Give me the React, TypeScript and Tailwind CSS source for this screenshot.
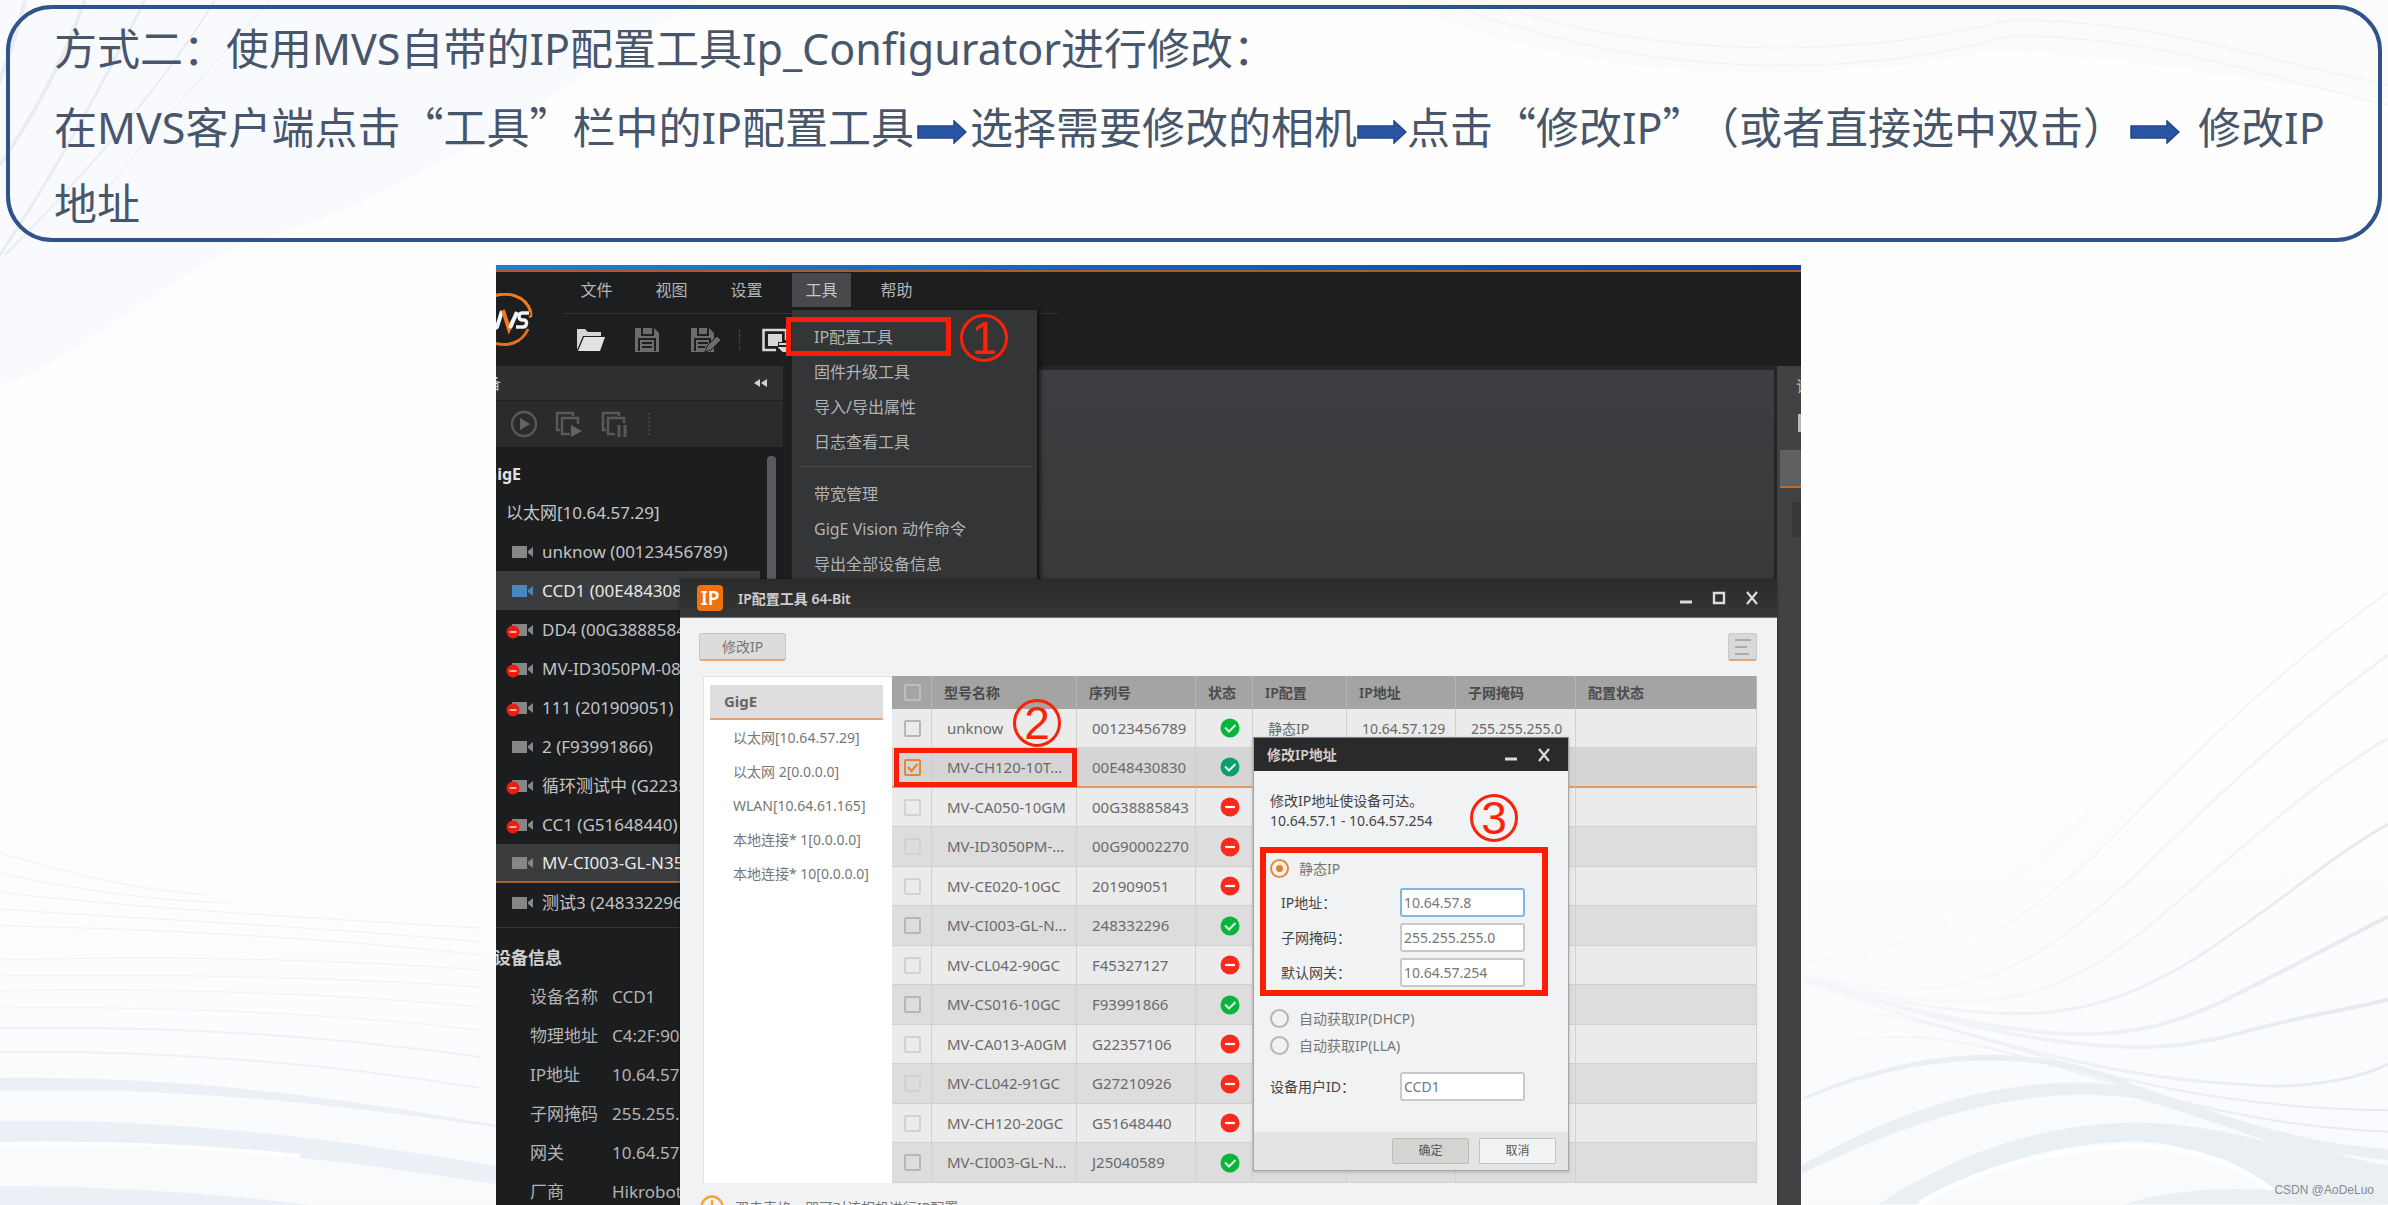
import React, { useState } from "react";

const sans = "font-['Noto_Sans','Noto_Sans_CJK_SC',sans-serif]";
const cjk = "font-['Noto_Sans_CJK_SC',sans-serif]";

const menus = ["文件", "视图", "设置", "工具", "帮助"];

const toolItems = ["IP配置工具", "固件升级工具", "导入/导出属性", "日志查看工具"];
const toolItemsMore = ["带宽管理", "GigE Vision 动作命令", "导出全部设备信息"];

const cameras = [
  { name: "unknow (00123456789)", state: "idle" },
  { name: "CCD1 (00E48430830)", state: "open" },
  { name: "DD4 (00G38885843)", state: "off" },
  { name: "MV-ID3050PM-08S (00G90002270)", state: "off" },
  { name: "111 (201909051)", state: "off" },
  { name: "2 (F93991866)", state: "idle" },
  { name: "循环测试中 (G22357106)", state: "off" },
  { name: "CC1 (G51648440)", state: "off" },
  { name: "MV-CI003-GL-N35 (J25040589)", state: "active" },
  { name: "测试3 (248332296)", state: "idle" },
];

const deviceInfo = [
  ["设备名称", "CCD1"],
  ["物理地址", "C4:2F:90:"],
  ["IP地址", "10.64.57."],
  ["子网掩码", "255.255.255.0"],
  ["网关", "10.64.57."],
  ["厂商", "Hikrobot"],
];

const networks = [
  "以太网[10.64.57.29]",
  "以太网 2[0.0.0.0]",
  "WLAN[10.64.61.165]",
  "本地连接* 1[0.0.0.0]",
  "本地连接* 10[0.0.0.0]",
];

const columns = ["型号名称", "序列号", "状态", "IP配置", "IP地址", "子网掩码", "配置状态"];

const rows = [
  { model: "unknow", serial: "00123456789", ok: true, mode: "静态IP", ip: "10.64.57.129", mask: "255.255.255.0" },
  { model: "MV-CH120-10T...", serial: "00E48430830", ok: true, selected: true },
  { model: "MV-CA050-10GM", serial: "00G38885843", ok: false },
  { model: "MV-ID3050PM-...", serial: "00G90002270", ok: false },
  { model: "MV-CE020-10GC", serial: "201909051", ok: false },
  { model: "MV-CI003-GL-N...", serial: "248332296", ok: true },
  { model: "MV-CL042-90GC", serial: "F45327127", ok: false },
  { model: "MV-CS016-10GC", serial: "F93991866", ok: true },
  { model: "MV-CA013-A0GM", serial: "G22357106", ok: false },
  { model: "MV-CL042-91GC", serial: "G27210926", ok: false },
  { model: "MV-CH120-20GC", serial: "G51648440", ok: false },
  { model: "MV-CI003-GL-N...", serial: "J25040589", ok: true },
];

const Waves = () => (
  <svg
    className="absolute inset-0 w-full h-full"
    viewBox="0 0 2388 1205"
    preserveAspectRatio="none"
    fill="none"
    aria-hidden="true"
  >
    <defs>
      <linearGradient id="haze" x1="0" y1="0" x2="0" y2="1">
        <stop offset="0" stopColor="#fefefe" />
        <stop offset="1" stopColor="#f9fafc" />
      </linearGradient>
      <linearGradient id="strand" gradientUnits="userSpaceOnUse" x1="0" y1="0" x2="1568" y2="0">
        <stop offset="0" stopColor="#e6eaf0" stopOpacity="0.1" />
        <stop offset="0.35" stopColor="#e6eaf0" stopOpacity="0.5" />
        <stop offset="1" stopColor="#e6eaf0" />
      </linearGradient>
      <linearGradient id="strandSoft" gradientUnits="userSpaceOnUse" x1="0" y1="0" x2="1568" y2="0">
        <stop offset="0" stopColor="#f0f2f6" stopOpacity="0.2" />
        <stop offset="1" stopColor="#f0f2f6" />
      </linearGradient>
    </defs>
    <path d="M0 0H700C600 60 420 200 240 245C150 290 60 370 0 385Z" fill="#f9fafe" />
    <path d="M1400 0C1560 80 1800 90 2000 50C2150 60 2250 80 2388 100V0Z" fill="#fbfbfc" />
    <path d="M0 830C200 835 300 865 496 865V1205H0Z" fill="url(#haze)" />
    <path d="M1801 850C2000 800 2200 760 2388 720V1205H1801Z" fill="url(#haze)" />
    <g stroke="#e9ecf0" strokeWidth="2">
      <path d="M25 0C18 30 8 60 -4 90" strokeWidth="4" />
      <path d="M85 0C60 70 30 120 0 165" strokeWidth="4" />
      <path d="M145 0C100 90 50 180 0 255" strokeWidth="3" />
      <path d="M215 0C160 90 80 180 5 255" />
      <path d="M270 0C220 60 150 130 100 200" strokeWidth="1" />
    </g>
    <g stroke="#f3f5f9" strokeWidth="2">
      <path d="M1480 0C1650 60 1850 60 2010 20C2160 20 2260 60 2388 85" />
      <path d="M1440 0C1640 80 1850 80 2010 36C2160 36 2260 76 2388 105" />
    </g>
    <g stroke="#eef1f6" strokeWidth="1">
      <path d="M0 853C60 870 130 890 210 895" />
      <path d="M0 873C70 888 140 900 230 903" />
      <path d="M0 892C80 902 200 912 480 928" />
      <path d="M0 909C120 918 300 925 480 942" />
      <path d="M0 926C120 928 300 935 480 955" />
      <path d="M0 960C150 956 320 958 480 970" />
      <path d="M0 976C150 974 320 976 480 987" />
      <path d="M0 991C150 988 320 992 480 1007" />
      <path d="M0 1008C150 1006 320 1012 480 1030" />
      <path d="M0 1028C150 1026 320 1034 480 1057" strokeWidth="2" />
      <path d="M0 1052C150 1050 320 1062 480 1088" strokeWidth="2" />
    </g>
    <path d="M0 1078C180 1076 330 1096 496 1125V1127C330 1104 180 1086 0 1091Z" fill="#eceff5" />
    <path d="M0 1121C180 1118 340 1140 496 1166V1184C340 1160 180 1140 0 1142Z" fill="#ebeff6" />
    <path d="M0 1144C120 1142 220 1148 300 1156" stroke="#fff" strokeWidth="4" />
    <path d="M0 1186C120 1186 230 1195 310 1205H0Z" fill="#ebeff6" />

    <g transform="translate(1800 240) scale(.375 .615)">
      <g stroke="url(#strand)" strokeWidth="2">
        <path d="M5 1172C300 1170 560 1060 770 930" strokeWidth="1" stroke="#f5f6f9" vectorEffect="non-scaling-stroke" />
        <path d="M5 1205C300 1215 560 1150 900 930C1120 790 1340 670 1568 573" stroke="url(#strandSoft)" vectorEffect="non-scaling-stroke" />
        <path d="M5 1190C400 1260 600 1200 900 1030C1150 880 1350 770 1568 675" strokeWidth="3" stroke="url(#strandSoft)" vectorEffect="non-scaling-stroke" />
        <path d="M5 1195C500 1280 700 1240 1000 1080C1250 950 1400 870 1568 810" strokeWidth="3" stroke="url(#strandSoft)" vectorEffect="non-scaling-stroke" />
        <path d="M5 1198C600 1300 800 1260 1050 1170C1300 1070 1420 1000 1568 950" strokeWidth="3" vectorEffect="non-scaling-stroke" />
        <path d="M5 1200C700 1330 900 1300 1120 1240C1320 1180 1440 1140 1568 1100" strokeWidth="4" vectorEffect="non-scaling-stroke" />
        <path d="M5 1202C750 1345 1000 1320 1200 1285C1350 1260 1480 1250 1568 1235" strokeWidth="4" vectorEffect="non-scaling-stroke" />
        <path d="M5 1205C780 1370 1080 1370 1270 1376C1400 1374 1500 1360 1568 1340" strokeWidth="3" vectorEffect="non-scaling-stroke" />
        <path d="M5 1262C400 1220 700 1410 1568 1415" vectorEffect="non-scaling-stroke" />
        <path d="M10 1317C500 1230 800 1430 1568 1450" vectorEffect="non-scaling-stroke" />
      </g>
      <path d="M10 1393C400 1290 700 1320 900 1375C1150 1430 1350 1470 1568 1478V1496C1300 1480 1100 1430 900 1385C700 1330 400 1300 10 1398Z" fill="#ebeff4" />
      <path d="M5 1505C300 1400 600 1350 900 1378C1150 1420 1350 1480 1568 1505V1540C1400 1500 1150 1440 900 1396C600 1370 300 1430 5 1518Z" fill="#ebeff4" />
      <path d="M210 1568C500 1450 800 1420 1050 1442C1250 1460 1430 1500 1568 1530V1568H1330C1150 1490 980 1465 900 1466C700 1466 500 1500 310 1568Z" fill="#eaeff4" />
      <path d="M320 1566C520 1495 740 1474 900 1474C1050 1476 1180 1500 1300 1566" stroke="#fff" strokeWidth="9" />
      <path d="M860 1568C1050 1535 1250 1535 1568 1568Z" fill="#eaeff4" />
    </g>
  </svg>
);

const Arrow = ({ className = "" }: { className?: string }) => (
  <svg className={`inline-block w-[50px] h-[24px] align-middle ${className}`} viewBox="0 0 50 24">
    <path d="M1 6H37V1L49 12L37 23V18H1Z" fill="#2a55a5" stroke="#23468a" strokeWidth="1.5" />
  </svg>
);

const Step = ({ n, className }: { n: number; className: string }) => (
  <span
    className={`absolute w-[48px] h-[48px] rounded-full border-3 border-[#fb2208] text-[#fb2208] flex items-center justify-center font-['Liberation_Sans',sans-serif] text-[46px] leading-[44px] ${className}`}
  >
    {n}
  </span>
);

const CameraIcon = ({ state }: { state: string }) => (
  <svg className="w-[28px] h-[18px] shrink-0" viewBox="0 0 28 18">
    <path
      d="M6 3H21V15H6Z M22 8L27 4V14L22 10Z"
      fill={state === "open" ? "#4a86bb" : "#858687"}
    />
    {state === "off" && (
      <>
        <circle cx="7" cy="11" r="6.5" fill="#ec1c10" />
        <path d="M3.5 11H10.5" stroke="#ffd9d2" strokeWidth="1.6" />
      </>
    )}
  </svg>
);

const StatusIcon = ({ ok, selected }: { ok: boolean; selected?: boolean }) => (
  <svg className="block w-[20px] h-[20px]" viewBox="0 0 20 20" fill="none">
    <circle cx="10" cy="10" r="9.5" fill={ok ? (selected ? "#0b9e70" : "#08b43c") : "#fa2a1c"} />
    {ok ? (
      <path d="M5 9.5L9 13.5L15.5 7" stroke="#d9f7e3" strokeWidth="2" />
    ) : (
      <path d="M5 10H15" stroke="#fff" strokeWidth="2.2" />
    )}
  </svg>
);

const Minimize = () => (
  <svg className="w-[14px] h-[14px]" viewBox="0 0 14 14">
    <path d="M1 11H13" stroke="#dcdcdc" strokeWidth="3" />
  </svg>
);

const Close = () => (
  <svg className="w-[14px] h-[14px]" viewBox="0 0 14 14">
    <path d="M2 1L12 13M12 1L2 13" stroke="#dcdcdc" strokeWidth="2.2" />
  </svg>
);

const Logo = () => (
  <svg className="block w-[37px] h-[56px] overflow-hidden" viewBox="0 0 37 56" fill="none">
    <path d="M-2 3C10 -1 29 1 35 19" stroke="#f07a1c" strokeWidth="3" />
    <path d="M35 19C36 23 35 25 33 23" stroke="#f07a1c" strokeWidth="2" />
    <path d="M-2 50C12 54 26 50 32 36" stroke="#e2701c" strokeWidth="3" />
    <path d="M-4 37L1 34L6 18" stroke="#f4f4f4" strokeWidth="4" />
    <path d="M7 17L13 36L17 27" stroke="#f07a1c" strokeWidth="4" />
    <path d="M14 35L21 19" stroke="#f4f4f4" strokeWidth="4" />
    <path d="M33 20H26C22 20 22 27 26 27H28C32 27 31 34 27 34H20" stroke="#f4f4f4" strokeWidth="3.5" />
  </svg>
);

const Toolbar = () => (
  <div className="flex items-center h-[52px] pl-[13px]">
    <button aria-label="打开" className="w-[58px]">
      <svg className="w-[28px] h-[24px]" viewBox="0 0 28 24">
        <path d="M0 1H8L11 4H24V8H6L0 22Z" fill="#d6d6d6" />
        <path d="M7 9H28L23 23H1Z" fill="#e2e2e2" />
      </svg>
    </button>
    <button aria-label="保存" className="w-[56px]">
      <svg className="w-[24px] h-[24px]" viewBox="0 0 24 24">
        <path d="M0 0H19L24 5V24H0Z" fill="#6c6d6f" />
        <path d="M7 0V7H18V0" fill="none" stroke="#1d1e1f" strokeWidth="2" />
        <path d="M4 23V11H20V23M7 15H17M7 19H17" fill="none" stroke="#1d1e1f" strokeWidth="2" />
      </svg>
    </button>
    <button aria-label="另存为" className="w-[48px]">
      <svg className="w-[30px] h-[24px]" viewBox="0 0 30 24">
        <path d="M0 0H18L23 5V24H0Z" fill="#6c6d6f" />
        <path d="M7 0V7H17V0M4 23V11H19V23M7 15H17M7 19H14" fill="none" stroke="#1d1e1f" strokeWidth="2" />
        <path d="M14 24L16 18L26 8L30 12L20 22Z" fill="#6c6d6f" stroke="#1d1e1f" />
      </svg>
    </button>
    <span className="h-[20px] border-l border-dotted border-[#555] mr-[22px]" />
    <button aria-label="导出">
      <svg className="w-[28px] h-[24px]" viewBox="0 0 28 24" fill="none">
        <path d="M14 22H1.5V2H24V12" stroke="#d8d8d8" strokeWidth="2.5" />
        <path d="M6 6H20V14H16V18H6Z" fill="#d8d8d8" />
        <path d="M17 16H28M18 20H27L22 24Z" stroke="#d8d8d8" strokeWidth="2" fill="#d8d8d8" />
      </svg>
    </button>
  </div>
);

const Sidebar = () => (
  <aside className="w-[287px] shrink-0 bg-[#1c1d1f] text-[17px] text-[#c4c4c4]">
    <div className="h-[35px] bg-[#2f3031] border-b border-[#1f2021] flex items-center justify-between pr-[16px]">
      <div className="w-[5px] flex justify-end overflow-hidden whitespace-nowrap text-[16px]">设备</div>
      <svg className="w-[13px] h-[8px]" viewBox="0 0 13 8">
        <path d="M6 0V8L0 4ZM13 0V8L7 4Z" fill="#d0d0d0" />
      </svg>
    </div>
    <div className="h-[46px] bg-[#2a2b2c] flex items-center pl-[14px]">
      <svg className="w-[140px] h-[28px]" viewBox="0 0 140 28" fill="none" stroke="#58595a" strokeWidth="2.4">
        <circle cx="14" cy="14" r="12" />
        <path d="M10 8L20 14L10 20Z" fill="#626364" stroke="none" />
        <path d="M50 20H47V3H63V6" />
        <path d="M60 24H52V8H68V14" />
        <path d="M61 15L72 21L61 27Z" fill="#626364" stroke="none" />
        <path d="M96 20H93V3H109V6" />
        <path d="M105 24H98V8H114V13" />
        <path d="M109 15V27M115 15V27" strokeWidth="3" />
        <path d="M139 3V25" strokeWidth="1" strokeDasharray="2 2" />
      </svg>
    </div>
    <div className="flex pt-[7px]">
      <ul className="w-[264px] overflow-hidden whitespace-nowrap">
        <li className="h-[39px] flex items-center">
          <span className="w-[25px] flex justify-end overflow-hidden text-[16px] font-bold text-[#e0e0e0]">
            GigE
          </span>
        </li>
        <li className="h-[39px] flex items-center pl-[10px]">以太网[10.64.57.29]</li>
        {cameras.map((item) => (
          <li
            key={item.name}
            className={`h-[39px] flex items-center gap-x-2 pl-[10px] ${
              item.state === "open"
                ? "bg-[#3b3c3d] text-[#e8e8e8]"
                : item.state === "active"
                ? "bg-[#3b3c3d] text-[#e8e8e8] border-b-2 border-[#a9602a]"
                : ""
            }`}
          >
            <CameraIcon state={item.state} />
            {item.name}
          </li>
        ))}
      </ul>
      <div className="ml-[7px] mt-[2px] w-[9px] rounded-t-sm bg-[#595a60]" />
    </div>
    <div className="mt-[5px] border-t border-[#303132] pt-[10px]">
      <h2 className="h-[39px] flex items-center font-bold text-[#d0d0d0]">
        <span className="-ml-[2px]">设备信息</span>
      </h2>
      <dl className="grid grid-cols-[82px_1fr] pl-[34px] whitespace-nowrap">
        {deviceInfo.map(([label, value]) => (
          <React.Fragment key={label}>
            <dt className="h-[39px] flex items-center text-[#b4b4b4]">{label}</dt>
            <dd className="h-[39px] flex items-center text-[#b4b4b4]">{value}</dd>
          </React.Fragment>
        ))}
      </dl>
    </div>
  </aside>
);

const ToolMenu = () => (
  <div className="absolute left-[296px] top-[45px] w-[245px] h-[280px] bg-[#343536] text-[16px] text-[#b2b3b5] pt-[9px] px-[6px] shadow-[3px_2px_4px_#111]">
    {toolItems.map((item) => (
      <button key={item} className="flex items-center w-full h-[35px] pl-[16px]">
        {item}
      </button>
    ))}
    <hr className="border-[#4a4b4c] mt-[7px] mb-[9px]" />
    {toolItemsMore.map((item) => (
      <button key={item} className="flex items-center w-full h-[35px] pl-[16px]">
        {item}
      </button>
    ))}
  </div>
);

const DeviceTable = () => (
  <table className="flex-1 table-fixed border-separate border-spacing-0 text-left text-[14px] text-[#6a6a6a] whitespace-nowrap">
    <colgroup>
      <col className="w-[40px]" />
      <col className="w-[145px]" />
      <col className="w-[119px]" />
      <col className="w-[57px]" />
      <col className="w-[94px]" />
      <col className="w-[109px]" />
      <col className="w-[120px]" />
      <col />
    </colgroup>
    <thead>
      <tr className="bg-[#a4a4a4] text-[#4b4b4b]">
        <th className="h-[33px] p-0 pl-[12px] border-r border-[#b5b5b5]">
          <input
            type="checkbox"
            aria-label="全选"
            className="block appearance-none w-[17px] h-[17px] border-2 border-[#bdbdbd] rounded-xs"
          />
        </th>
        {columns.map((item) => (
          <th key={item} className="h-[33px] p-0 pl-[12px] border-r border-[#b5b5b5] font-semibold">
            {item}
          </th>
        ))}
      </tr>
    </thead>
    <tbody>
      {rows.map((row, index) => {
        const cell = `p-0 border-r ${
          index % 2 ? "h-[40px]" : "h-[39px]"
        } ${row.selected ? "border-b-2 border-b-[#e09a62] border-r-[#cccccc]" : "border-b border-[#d0d0d0]"}`;
        return (
          <tr
            key={row.serial}
            className={row.selected ? "bg-[#d6d5d5]" : index % 2 ? "bg-[#dddddd]" : "bg-[#ebebeb]"}
          >
            <td className={`${cell} pl-[12px]`}>
              <span className="relative block w-[17px] h-[17px]">
                <input
                  type="checkbox"
                  aria-label={row.model}
                  defaultChecked={row.selected}
                  className={`block appearance-none w-[17px] h-[17px] border-2 rounded-xs ${
                    row.selected
                      ? "border-[#e98532]"
                      : row.ok
                      ? "border-[#b6b6b6]"
                      : "border-[#d2d2d2]"
                  }`}
                />
                {row.selected && (
                  <svg className="absolute inset-0" viewBox="0 0 17 17" fill="none">
                    <path d="M4 8L7.500 12L13.500 5" stroke="#e98532" strokeWidth="2.2" />
                  </svg>
                )}
              </span>
            </td>
            <td className={`${cell} pl-[15px] text-[15px]`}>{row.model}</td>
            <td className={`${cell} pl-[15px] text-[15px]`}>{row.serial}</td>
            <td className={`${cell} pl-[24px]`}>
              <StatusIcon ok={row.ok} selected={row.selected} />
            </td>
            <td className={`${cell} pl-[15px]`}>{row.mode}</td>
            <td className={`${cell} pl-[15px]`}>{row.ip}</td>
            <td className={`${cell} pl-[15px]`}>{row.mask}</td>
            <td className={cell} />
          </tr>
        );
      })}
    </tbody>
  </table>
);

const Field = ({ id, label, value, focused, labelClass }: any) => (
  <div className="flex items-center h-[29px]">
    <label htmlFor={id} className={`text-[#444] ${labelClass}`}>
      {label}
    </label>
    <input
      id={id}
      defaultValue={value}
      className={`w-[125px] h-[29px] bg-white border-2 rounded-[3px] px-[2px] text-[#777] outline-none ${
        focused ? "border-[#83b5e0]" : "border-[#c9c9c9]"
      }`}
    />
  </div>
);

const Radio = ({ value, mode, setMode, label }: any) => (
  <label className="flex items-center gap-x-[10px] h-[27px] text-[#777]">
    <span className="relative w-[19px] h-[19px]">
      <input
        type="radio"
        name="mode"
        checked={mode === value}
        onChange={() => setMode(value)}
        className="block appearance-none w-[19px] h-[19px] rounded-full border-2 border-[#b5b5b5] checked:border-[#e5893a]"
      />
      {mode === value && (
        <span className="absolute left-[6px] top-[6px] w-[7px] h-[7px] rounded-full bg-[#ea7d20]" />
      )}
    </span>
    {label}
  </label>
);

const IpDialog = () => {
  const [mode, setMode] = useState("static");
  return (
    <div className="absolute left-[573px] top-[158px] w-[316px] bg-[#f1f2f4] border border-[#a5a7a9] border-t-[#c26a4a] text-[14px] shadow-[0_1px_3px_#8888]">
      <div className="flex items-center h-[33px] bg-[#2a2a2a] pl-[13px] pr-[17px] text-[#cfcfcf]">
        <h3 className="flex-1 font-semibold">修改IP地址</h3>
        <button aria-label="最小化">
          <Minimize />
        </button>
        <button aria-label="关闭" className="ml-[19px]">
          <Close />
        </button>
      </div>
      <p className="pt-[20px] pl-[16px] leading-[20px] text-[#444]">
        修改IP地址使设备可达。
        <br />
        10.64.57.1 - 10.64.57.254
      </p>
      <Step n={3} className="left-[216px] top-[56px]" />
      <div className="mt-[16px] ml-[6px] w-[288px] h-[149px] border-6 border-[#fb1d05] pl-[3px]">
        <div className="pl-[1px] pt-[2px]">
          <Radio value="static" mode={mode} setMode={setMode} label="静态IP" />
        </div>
        <div className="flex flex-col gap-y-[6px] mt-[6px] pl-[12px]">
          <Field id="ip" label="IP地址：" value="10.64.57.8" focused labelClass="w-[119px]" />
          <Field id="mask" label="子网掩码：" value="255.255.255.0" labelClass="w-[119px]" />
          <Field id="gateway" label="默认网关：" value="10.64.57.254" labelClass="w-[119px]" />
        </div>
      </div>
      <div className="mt-[9px] pl-[16px]">
        <Radio value="dhcp" mode={mode} setMode={setMode} label="自动获取IP(DHCP)" />
        <Radio value="lla" mode={mode} setMode={setMode} label="自动获取IP(LLA)" />
      </div>
      <div className="mt-[13px] pl-[16px]">
        <Field id="userid" label="设备用户ID：" value="CCD1" labelClass="w-[130px]" />
      </div>
      <div className="flex items-center justify-end gap-x-[10px] mt-[31px] h-[38px] pr-[12px] bg-[#e2e4e6] text-[12px] text-[#555]">
        <button className="w-[77px] h-[26px] bg-[#d4d4d1] border border-[#bcbcbc] rounded-xs">确定</button>
        <button className="w-[77px] h-[26px] bg-[#f2f3f5] border border-[#c2c2c2] rounded-xs">取消</button>
      </div>
    </div>
  );
};

const ConfigWindow = () => (
  <div className="absolute left-[184px] right-[24px] top-[314px] bottom-0 bg-[#f1f2f4] shadow-[0_0_3px_#0006]">
    <div className="flex items-center h-[39px] bg-linear-to-b from-[#2a2a2a] to-[#363636] pl-[17px] pr-[18px] border-b border-[#777]">
      <span className="w-[26px] h-[26px] rounded-[4px] bg-[#f0720e] text-white text-[19px] leading-[26px] font-semibold text-center">
        IP
      </span>
      <h2 className="flex-1 ml-[15px] text-[14px] font-semibold text-[#cfcfcf]">IP配置工具 64-Bit</h2>
      <button aria-label="最小化">
        <Minimize />
      </button>
      <button aria-label="最大化" className="mx-[19px]">
        <svg className="w-[14px] h-[14px]" viewBox="0 0 14 14">
          <path d="M2 2H12V12H2Z" fill="none" stroke="#dcdcdc" strokeWidth="2.4" />
        </svg>
      </button>
      <button aria-label="关闭">
        <Close />
      </button>
    </div>
    <div className="flex justify-between pt-[15px] pl-[19px] pr-[20px]">
      <button className="w-[87px] h-[28px] bg-[#dcdcda] border border-[#c6c6c6] border-b-2 border-b-[#e3a577] rounded-[3px] text-[14px] leading-[24px] text-[#777]">
        修改IP
      </button>
      <button
        aria-label="列表"
        className="flex items-center justify-center w-[29px] h-[28px] bg-[#d9d9d9] border border-[#cacaca] border-b-2 border-b-[#e3a577] rounded-[3px]"
      >
        <svg className="w-[18px] h-[16px]" viewBox="0 0 18 16">
          <path d="M1 1H17M1 8H13M1 15H15" stroke="#acacac" strokeWidth="2" />
        </svg>
      </button>
    </div>
    <div className="flex mt-[15px] pl-[23px] pr-[20px]">
      <div className="w-[189px] shrink-0 bg-white border-l border-t border-[#e2e2e4] pt-[8px] pl-[6px] pr-[9px] text-[14px] text-[#777]">
        <div className="h-[35px] flex items-center bg-[#dfdddd] border-b-2 border-[#e3a577] pl-[14px] text-[15px] font-bold text-[#666]">
          GigE
        </div>
        {networks.map((item) => (
          <div key={item} className="h-[34px] flex items-center pl-[23px] whitespace-nowrap">
            {item}
          </div>
        ))}
      </div>
      <DeviceTable />
    </div>
    <div className="flex items-center mt-[12px] pl-[20px] text-[14px] text-[#777]">
      <svg className="w-[24px] h-[24px] mr-[11px]" viewBox="0 0 24 24" fill="none" stroke="#f3a53a" strokeWidth="2.4">
        <circle cx="12" cy="12" r="10.500" />
        <path d="M12 5V14M12 16V19" />
      </svg>
      双击表格，即可对该相机进行IP配置
    </div>
    <div className="absolute left-[214px] top-[169px] w-[183px] h-[39px] border-5 border-[#fb1d05]" />
    <Step n={2} className="left-[333px] top-[120px]" />
    <IpDialog />
  </div>
);

const MvsClient = () => (
  <div className={`relative flex-1 flex flex-col overflow-hidden bg-[#1c1e1f] ${sans}`}>
    <div className="h-[7px] shrink-0 bg-linear-to-r from-[#1a82d2] to-[#0f42ae] border-b-2 border-[#b0582e]" />
    <header className="flex shrink-0 h-[94px]">
      <div className="w-[68px] pt-[21px]">
        <Logo />
      </div>
      <div>
        <nav className="flex gap-x-[16px] h-[42px] pl-[3px] pt-[1px] border-b border-[#343536] w-[494px]">
          {menus.map((item) => (
            <button
              key={item}
              className={`w-[59px] h-[34px] text-[16px] ${
                item === "工具" ? "bg-[#47494c] text-[#c8c8c8]" : "text-[#b4b4b4]"
              }`}
            >
              {item}
            </button>
          ))}
        </nav>
        <Toolbar />
      </div>
    </header>
    <div className="flex flex-1">
      <Sidebar />
      <main className="flex-1 ml-[8px] bg-linear-to-b from-[#3d3e41] to-[#37393a] to-[210px] border-4 border-r-3 border-[#242526]" />
      <aside className="w-[24px] shrink-0 overflow-hidden bg-[#414244] text-[16px] text-[#b4b4b4]">
        <div className="h-[42px] pl-[19px] pt-[8px] whitespace-nowrap">详细</div>
        <div className="ml-[21px] mt-[6px] h-[18px] bg-[#bbb]" />
        <div className="ml-[3px] mt-[18px] h-[38px] bg-[#5e6062] border-b-2 border-[#bd6c2c]" />
        <div className="ml-[15px] mt-[14px] h-[35px] bg-[#37383a]" />
      </aside>
    </div>
    <ToolMenu />
    <div className="absolute left-[290px] top-[52px] w-[165px] h-[39px] border-5 border-[#fb1d05]" />
    <Step n={1} className="left-[464px] top-[49px]" />
    <ConfigWindow />
  </div>
);

const App = () => {
  return (
    <div lang="zh-CN" className="relative flex flex-col h-screen overflow-hidden bg-[#fefefe]">
      <Waves />
      <section
        className={`relative shrink-0 mt-[5px] mx-[6px] h-[237px] border-4 border-[#30548a] rounded-[46px] pt-[2px] pl-[44px] text-[43px] leading-[76px] text-[#48566b] whitespace-nowrap ${sans}`}
      >
        <p>方式二：使用MVS自带的IP配置工具Ip_Configurator进行修改：</p>
        <p>
          在MVS客户端点击<span className={cjk}>“</span>工具<span className={cjk}>”</span>
          栏中的IP配置工具
          <Arrow className="mx-[3px]" />
          选择需要修改的相机
          <Arrow />
          点击<span className={cjk}>“</span>修改IP<span className={`mr-[12px] ${cjk}`}>”</span>
          （或者直接选中双击）
          <Arrow className="ml-[4px] mr-[18px]" />
          修改IP
          <br />
          地址
        </p>
      </section>
      <div className="relative flex flex-1 min-h-0 mt-[23px] pl-[496px] pr-[587px]">
        <MvsClient />
      </div>
      <p className="absolute right-[14px] bottom-[7px] font-['Liberation_Sans',sans-serif] text-[12px] leading-[16px] text-[#8a8a8a]">
        CSDN @AoDeLuo
      </p>
    </div>
  );
};

export default App;
